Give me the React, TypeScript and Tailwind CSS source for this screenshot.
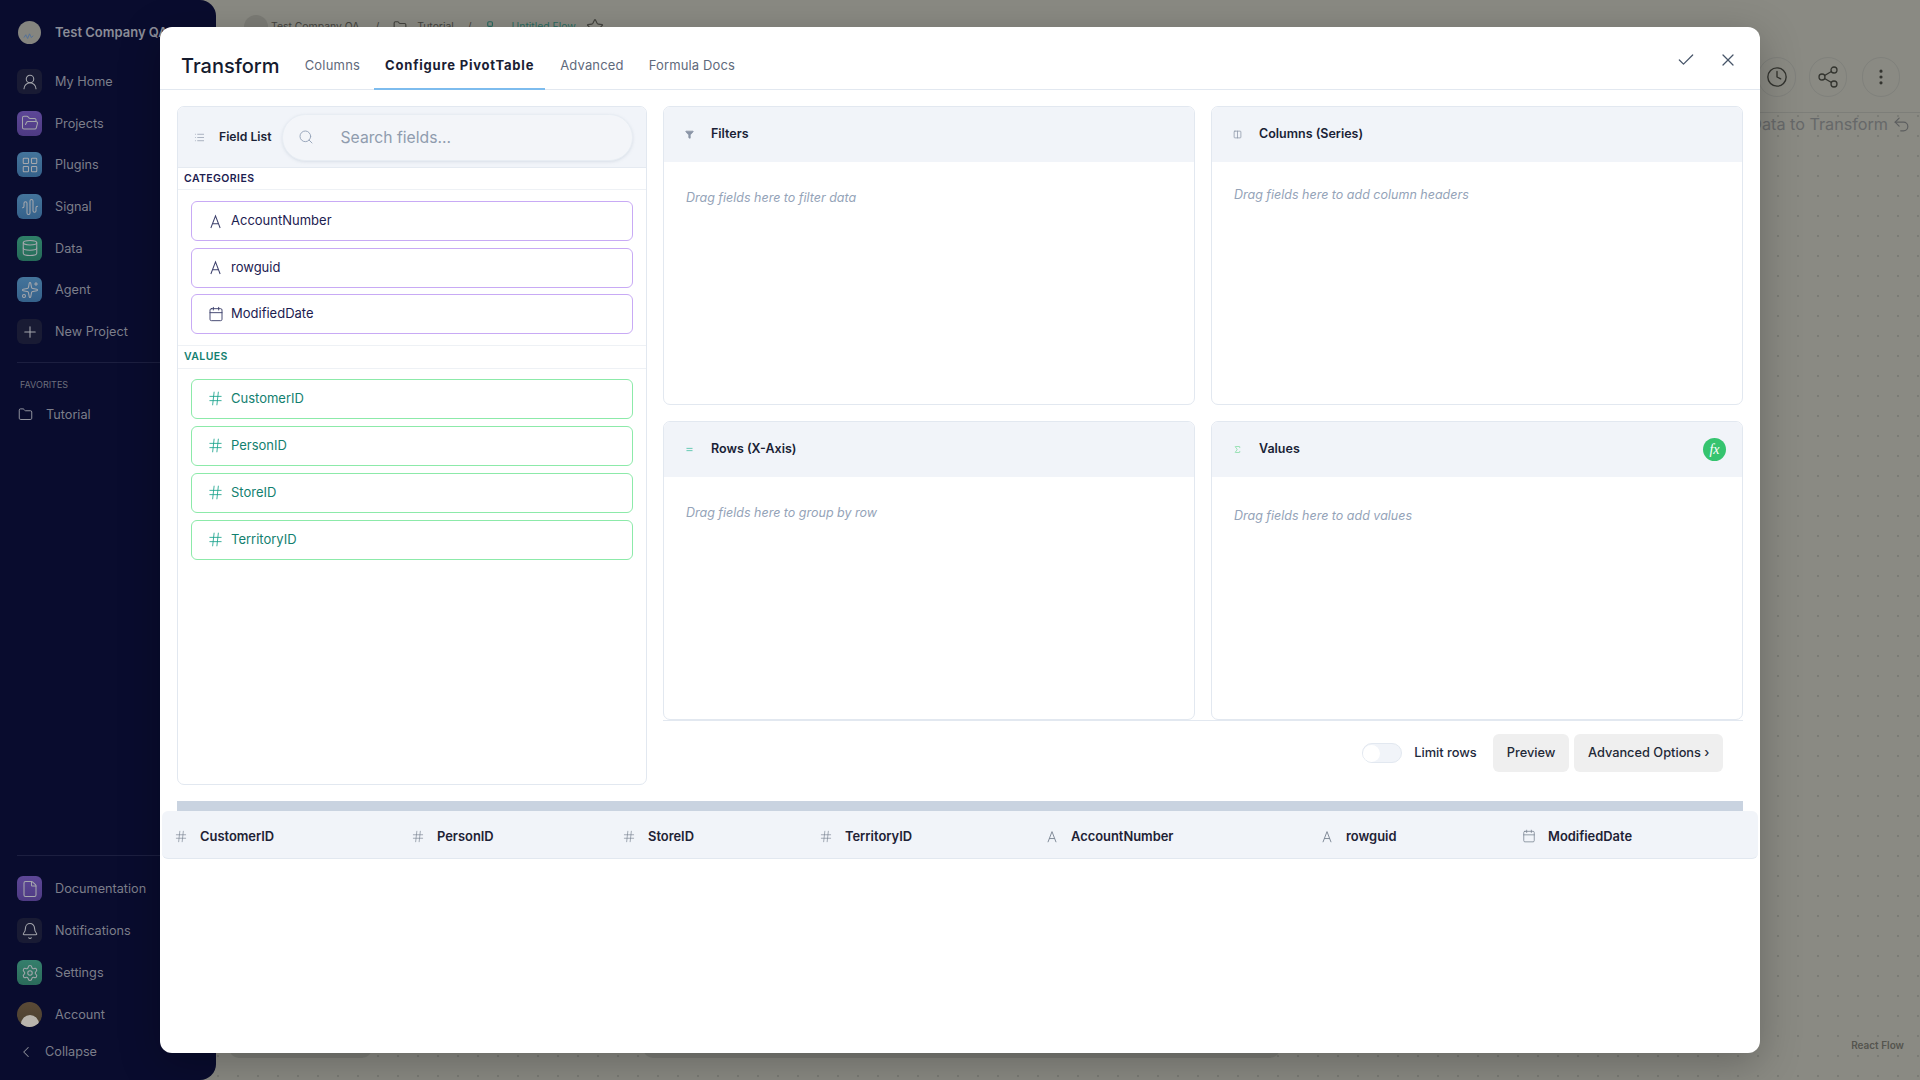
import React from "react";
import { UserRound, FolderOpen, LayoutGrid, AudioWaveform, Database, Sparkles, Plus, File, Bell, Settings, ChevronLeft, Check, X, Search, Hash, Calendar, Clock, Share2, EllipsisVertical, Undo2, Star, Folder, Workflow, List, Filter, Columns2, Equal, Sigma } from "lucide-react";

const ALetter = ({ className = "" }: { className?: string }) => (
  <svg viewBox="0 0 14 16" className={className} fill="none" stroke="currentColor" strokeWidth="1.1">
    <path d="M2 15 L7 2 L12 15 M3.6 10.5 H10.4" />
  </svg>
);

const SideItem = ({ icon, label, box }: { icon: React.ReactNode; label: string; box: string }) => (
  <div className="flex h-[25px] items-center gap-[13px]">
    <div className={`flex h-[25px] w-[25px] items-center justify-center rounded-[6px] text-[#a5a7ad] ${box}`}>{icon}</div>
    <span className="text-[12.7px] text-[#7c7e8a]">{label}</span>
  </div>
);

const Field = ({ icon, label, kind }: { icon: React.ReactNode; label: string; kind: "cat" | "val" }) => (
  <div className={`flex h-[40px] items-center gap-[7px] rounded-[6px] border-[1.5px] bg-white pl-[15px] text-[13px] font-normal ${kind === "cat" ? "border-[#c8aaf5] text-[#1c2050]" : "border-[#8ceaa9] text-[#12806f]"}`}>
    <span className={`flex w-[17px] justify-center ${kind === "cat" ? "text-[#3b3f6b]" : "text-[#1aa38d]"}`}>{icon}</span>
    {label}
  </div>
);

const Zone = ({ icon, title, hint, hintClass, extra }: { icon: React.ReactNode; title: string; hint: string; hintClass: string; extra?: React.ReactNode }) => (
  <div className="flex h-[299px] flex-col overflow-hidden rounded-[7px] border border-[#e2e8f0] bg-white">
    <div className="flex h-[54.5px] shrink-0 items-center bg-[#f1f4f9] pl-[21px] pr-[16px]">
      <span className="flex w-[26px]">{icon}</span>
      <span className="text-[12.5px] font-semibold text-[#1a1f36]">{title}</span>
      {extra}
    </div>
    <div className={`pl-[22px] text-[12.5px] italic leading-[16px] text-[#94a3b8] ${hintClass}`}>{hint}</div>
  </div>
);

const Col = ({ icon, label, w }: { icon: React.ReactNode; label: string; w: string }) => (
  <div className={`flex items-center gap-[12px] text-[12.9px] font-semibold text-[#1e2235] ${w}`}>
    <span className="flex w-[14px] justify-center text-[#76808f]">{icon}</span>
    {label}
  </div>
);

export default function App() {
  return (
    <div className="relative flex h-[1080px] w-[1920px] overflow-hidden bg-[#8a8a83] font-['Inter',sans-serif]">
      {/* sidebar */}
      <aside className="flex w-[216px] shrink-0 flex-col rounded-r-[16px] bg-[#090c2e] pl-[17px]">
        <div className="flex h-[66px] items-center gap-[14px] pb-[1px]">
          <div className="ml-[1px] flex h-[23px] w-[23px] items-end justify-center overflow-hidden rounded-full bg-[#85857f] pb-[5px]">
            <svg viewBox="0 0 14 8" className="w-[13px]" fill="none" stroke="#51709a" strokeWidth="1"><path d="M1 6 L3 3 L5 7 L7 2 L9 6 L11 4" /></svg>
          </div>
          <span className="whitespace-nowrap text-[13px] font-semibold text-[#8b8d98]">Test Company QA</span>
        </div>
        <nav className="mt-[3px] flex flex-col gap-[16.7px]">
          <SideItem box="bg-[#191b34]" label="My Home" icon={<UserRound size={18} strokeWidth={1.4} />} />
          <SideItem box="bg-gradient-to-b from-[#5d4797] to-[#4d3a82]" label="Projects" icon={<FolderOpen size={18} strokeWidth={1.4} />} />
          <SideItem box="bg-gradient-to-b from-[#44749b] to-[#35618a]" label="Plugins" icon={<LayoutGrid size={18} strokeWidth={1.4} />} />
          <SideItem box="bg-gradient-to-b from-[#44749b] to-[#35618a]" label="Signal" icon={<AudioWaveform size={18} strokeWidth={1.4} />} />
          <SideItem box="bg-gradient-to-b from-[#2f8068] to-[#256a58]" label="Data" icon={<Database size={18} strokeWidth={1.4} />} />
          <SideItem box="bg-gradient-to-b from-[#44749b] to-[#35618a]" label="Agent" icon={<Sparkles size={18} strokeWidth={1.4} />} />
          <SideItem box="bg-[#191b34]" label="New Project" icon={<Plus size={18} strokeWidth={1.4} />} />
        </nav>
        <div className="mt-[18px] h-px bg-[#1c1f40]" />
        <div className="ml-[3px] mt-[16px] text-[9px] leading-[12px] text-[#6d6f7d]">FAVORITES</div>
        <div className="ml-[1px] mt-[14px] flex h-[18px] items-center gap-[13px] text-[12.7px] text-[#7c7e8a]">
          <Folder size={15} strokeWidth={1.5} className="text-[#9a9ca5]" />
          Tutorial
        </div>
        <div className="mt-auto h-px bg-[#1c1f40]" />
        <div className="mt-[20px] flex flex-col gap-[17px]">
          <SideItem box="bg-gradient-to-b from-[#5d4797] to-[#4d3a82]" label="Documentation" icon={<File size={18} strokeWidth={1.4} />} />
          <SideItem box="bg-[#191b34]" label="Notifications" icon={<Bell size={18} strokeWidth={1.4} />} />
          <SideItem box="bg-gradient-to-b from-[#357f6c] to-[#2a6b5a]" label="Settings" icon={<Settings size={18} strokeWidth={1.4} />} />
          <div className="flex h-[25px] items-center gap-[13px]">
            <div className="flex h-[25px] w-[25px] items-end justify-center overflow-hidden rounded-full bg-gradient-to-b from-[#5b4a36] to-[#4a4030]">
              <div className="h-[12px] w-[18px] rounded-t-full bg-[#b9b5ad]" />
            </div>
            <span className="text-[12.7px] text-[#7c7e8a]">Account</span>
          </div>
        </div>
        <div className="mb-[19px] mt-[16px] flex h-[18px] items-center gap-[10px] text-[12.7px] text-[#7c7e8a]">
          <ChevronLeft size={18} strokeWidth={1.4} className="text-[#8a8c96]" />
          Collapse
        </div>
      </aside>

      {/* page behind the dialog */}
      <main className="relative flex min-w-0 flex-1 flex-col">
        <div className="h-[113px] shrink-0 border-b border-[#7d7e79]">
          <div className="flex h-[54px] items-center pl-[28px] text-[10.4px] text-[#44443f]">
            <div className="h-[24px] w-[24px] rounded-full bg-[#7c7c76]" />
            <span className="ml-[3px]">Test Company QA</span>
            <span className="ml-[16px]">/</span>
            <Folder size={14} className="ml-[14px]" />
            <span className="ml-[10px]">Tutorial</span>
            <span className="ml-[14px]">/</span>
            <Workflow size={14} className="ml-[14px] text-[#2a6a60]" />
            <span className="ml-[12px] text-[#2a6a60]">Untitled Flow</span>
            <Star size={18} className="ml-[10px]" strokeWidth={1.5} />
          </div>
          <div className="mt-[3px] flex justify-end pr-[20px]">
            <div className="flex h-[40px] w-[38px] items-center justify-center rounded-full border border-[#80817c] text-[#33342f]"><Clock size={22} strokeWidth={1.5} /></div>
            <div className="ml-[13px] flex h-[40px] w-[38px] items-center justify-center rounded-full border border-[#80817c] text-[#33342f]"><Share2 size={24} strokeWidth={1.3} /></div>
            <div className="ml-[15px] flex h-[40px] w-[38px] items-center justify-center rounded-full border border-[#80817c] text-[#33342f]"><EllipsisVertical size={20} strokeWidth={1.8} /></div>
          </div>
        </div>
        <div className="flex flex-1 flex-col bg-[radial-gradient(circle,#7a7b75_1px,transparent_1px)] bg-[length:20px_20px] bg-[position:-8px_-7px]">
          <div className="flex h-[20px] translate-y-[1px] items-center justify-end gap-[4px] pr-[9px] text-[16.2px] text-[#666869]">
            <span className="whitespace-nowrap">Data to Transform</span>
            <Undo2 size={19} strokeWidth={1.5} className="text-[#5c5e5f]" />
          </div>
          <div className="mt-auto flex justify-end pb-[27px] pr-[16px] text-[10px] font-semibold text-[#55554f]">React Flow</div>
        </div>
        <div className="absolute bottom-[22px] left-[13px] h-[10px] w-[143px] rounded-b-[10px] bg-[#7c7d77]" />
        <div className="absolute bottom-[22px] left-[427px] h-[10px] w-[637px] rounded-b-[10px] bg-[#7c7d77]" />
      </main>

      {/* dialog */}
      <div className="absolute left-[160px] top-[27px] flex h-[1026px] w-[1600px] flex-col rounded-[12px] bg-white shadow-[0_10px_40px_rgba(0,0,0,0.25)]">
        <header className="flex h-[63px] shrink-0 items-stretch border-b border-[#e2e8f0] pl-[21px] pr-[22px]">
          <h1 className="flex items-center pt-[15px] text-[20px] font-medium leading-none text-[#151b2e]">Transform</h1>
          <div className="ml-[15px] flex items-stretch text-[13px] text-[#5f6a7c]">
            <div className="flex items-center px-[10px] pt-[15px] tracking-[0.2px]">Columns</div>
            <div className="-mb-px ml-[4px] flex items-center border-b-[2px] border-[#7dbcee] px-[11px] pt-[16px] font-bold tracking-[0.8px] text-[#1a2033]">Configure PivotTable</div>
            <div className="flex items-center px-[15px] pt-[15px] tracking-[0.15px]">Advanced</div>
            <div className="flex items-center px-[10px] pt-[15px] tracking-[0.15px]">Formula Docs</div>
          </div>
          <div className="ml-auto flex items-start gap-[22px] pt-[23px] text-[#475569]">
            <Check size={20} strokeWidth={1.5} />
            <X size={20} strokeWidth={1.5} />
          </div>
        </header>

        <div className="flex h-[695px] shrink-0 gap-[16px] pl-[17px] pr-[17px] pt-[16px]">
          {/* field list */}
          <section className="flex w-[470px] shrink-0 flex-col overflow-hidden rounded-[7px] border border-[#e2e8f0]">
            <div className="flex h-[61px] shrink-0 items-center border-b border-[#e5eaf1] bg-[#f1f4f9] pl-[16px] pr-[13px]">
              <List size={11} strokeWidth={1.5} className="text-[#8b95a7]" />
              <span className="ml-[14px] whitespace-nowrap text-[12.2px] font-semibold text-[#1a1f36]">Field List</span>
              <div className="ml-[10px] flex h-[47px] flex-1 items-center rounded-full border border-[#e8edf3] bg-[#f3f5f9] pl-[15px] shadow-[0_1px_3px_rgba(148,163,184,0.25)]">
                <Search size={16} strokeWidth={1.4} className="text-[#94a3b8]" />
                <span className="ml-[27px] pt-[1px] text-[15.7px] text-[#8f9cae]">Search fields...</span>
              </div>
            </div>
            <div className="flex h-[22px] shrink-0 items-center border-b border-[#eef1f5] pl-[6px] text-[10.5px] font-semibold tracking-[0.4px] text-[#1c2050]">CATEGORIES</div>
            <div className="flex flex-col gap-[6.5px] border-b border-[#eef1f5] px-[13px] pb-[10.5px] pt-[11px]">
              <Field kind="cat" label="AccountNumber" icon={<ALetter className="h-[15px] w-[13px]" />} />
              <Field kind="cat" label="rowguid" icon={<ALetter className="h-[15px] w-[13px]" />} />
              <Field kind="cat" label="ModifiedDate" icon={<Calendar size={16} strokeWidth={1.4} />} />
            </div>
            <div className="flex h-[23px] shrink-0 items-center border-b border-[#eef1f5] pl-[6px] text-[10.5px] font-semibold tracking-[0.4px] text-[#12806f]">VALUES</div>
            <div className="flex flex-col gap-[7px] px-[13px] pt-[10px]">
              <Field kind="val" label="CustomerID" icon={<Hash size={17} strokeWidth={1.2} />} />
              <Field kind="val" label="PersonID" icon={<Hash size={17} strokeWidth={1.2} />} />
              <Field kind="val" label="StoreID" icon={<Hash size={17} strokeWidth={1.2} />} />
              <Field kind="val" label="TerritoryID" icon={<Hash size={17} strokeWidth={1.2} />} />
            </div>
          </section>

          {/* drop zones */}
          <section className="flex min-w-0 flex-1 flex-col">
            <div className="grid grid-cols-2 gap-x-[16px] gap-y-[16px] border-b border-[#e2e8f0]">
              <Zone icon={<Filter size={9} fill="#8b95a7" className="text-[#8b95a7]" />} title="Filters" hint="Drag fields here to filter data" hintClass="pt-[28px]" />
              <Zone icon={<Columns2 size={9} className="text-[#8b95a7]" />} title="Columns (Series)" hint="Drag fields here to add column headers" hintClass="pt-[25px]" />
              <Zone icon={<Equal size={9} strokeWidth={2.5} className="text-[#5fc7b0]" />} title="Rows (X-Axis)" hint="Drag fields here to group by row" hintClass="pt-[28px]" />
              <Zone
                icon={<Sigma size={9} className="text-[#7fdca0]" />}
                title="Values"
                hint="Drag fields here to add values"
                hintClass="pt-[31px]"
                extra={
                  <span className="ml-auto flex h-[23px] w-[23px] items-center justify-center rounded-full bg-[#35c46f] font-['Liberation_Serif',serif] text-[14px] italic text-white">fx</span>
                }
              />
            </div>
            <div className="mt-[13px] flex items-center justify-end pr-[20px]">
              <div className="flex h-[20px] w-[40px] items-center rounded-full border border-[#e2e8f0] bg-[#f1f4f9]">
                <div className="h-[17px] w-[17px] rounded-full bg-white" />
              </div>
              <span className="ml-[12px] text-[12.8px] font-medium text-[#1e293b]">Limit rows</span>
              <button className="ml-[16px] h-[38px] rounded-[6px] bg-[#efefef] px-[14px] text-[12.8px] font-medium text-[#1f2937]">Preview</button>
              <button className="ml-[5px] h-[38px] rounded-[6px] bg-[#efefef] px-[13.5px] text-[12.8px] font-medium text-[#1f2937]">Advanced Options ›</button>
            </div>
          </section>
        </div>

        {/* table */}
        <div className="mx-[17px] mt-[16px] h-[10px] shrink-0 bg-[#c9d3e0]" />
        <div className="mx-[2px] flex h-[48px] shrink-0 items-center rounded-[6px] border-b-[1.5px] border-[#e2e8f0] bg-[#f1f4f9] pl-[12px] pt-[4px]">
          <Col w="w-[237px]" label="CustomerID" icon={<Hash size={15} strokeWidth={1.1} />} />
          <Col w="w-[211px]" label="PersonID" icon={<Hash size={15} strokeWidth={1.1} />} />
          <Col w="w-[197px]" label="StoreID" icon={<Hash size={15} strokeWidth={1.1} />} />
          <Col w="w-[226px]" label="TerritoryID" icon={<Hash size={15} strokeWidth={1.1} />} />
          <Col w="w-[275px]" label="AccountNumber" icon={<ALetter className="h-[13px] w-[12px]" />} />
          <Col w="w-[202px]" label="rowguid" icon={<ALetter className="h-[13px] w-[12px]" />} />
          <Col w="w-[180px]" label="ModifiedDate" icon={<Calendar size={14} strokeWidth={1.3} />} />
        </div>
      </div>
    </div>
  );
}
